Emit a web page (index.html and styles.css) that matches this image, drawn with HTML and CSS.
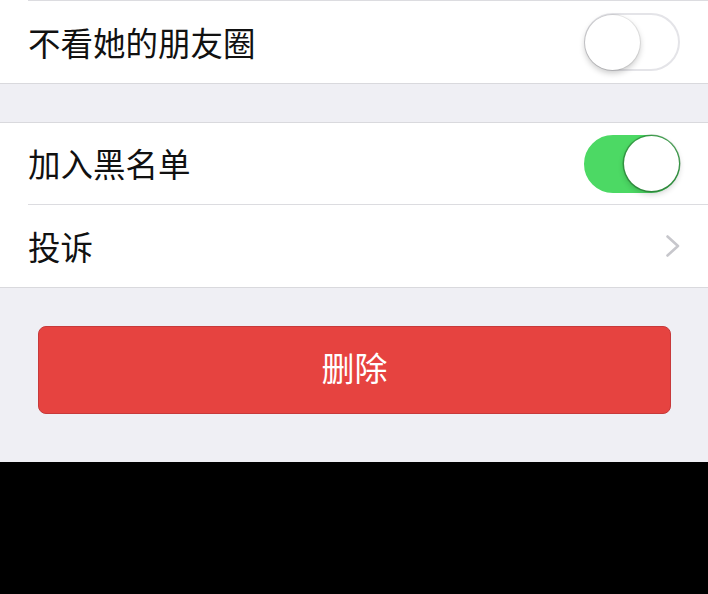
FILE: index.html
```html
<!DOCTYPE html>
<html lang="zh-CN">
<head>
<meta charset="utf-8">
<link rel="stylesheet" href="styles.css">
</head>
<body>
<div class="page">
  <div class="group group-first">
    <div class="sep"></div>
    <div class="row row-a">
      <span class="label">不看她的朋友圈</span>
      <span class="switch"><span class="knob"></span></span>
    </div>
  </div>
  <div class="gap"></div>
  <div class="group">
    <div class="row row-b">
      <span class="label">加入黑名单</span>
      <span class="switch on"><span class="knob"></span></span>
    </div>
    <div class="sep"></div>
    <div class="row row-c">
      <span class="label">投诉</span>
      <svg class="chev" width="16" height="24" viewBox="0 0 16 24"><path d="M2.5 2.5 L13 12 L2.5 21.5" fill="none" stroke="#c7c7cc" stroke-width="2.6" stroke-linecap="round" stroke-linejoin="round"/></svg>
    </div>
  </div>
  <div class="actions">
    <div class="btn-delete">删除</div>
  </div>
</div>
</body>
</html>
```
FILE: styles.css
```css
html, body {
  margin: 0;
  padding: 0;
  background: #000;
}
.page {
  width: 708px;
  height: 462px;
  background: #efeff4;
  font-family: "Noto Sans CJK SC", "Noto Sans", sans-serif;
  overflow: hidden;
}
.group {
  background: #fff;
  border-top: 1px solid #d9d9dd;
  border-bottom: 1px solid #d9d9dd;
}
.group-first {
  border-top: none;
}
.sep {
  height: 1px;
  margin-left: 28px;
  background: #dcdce0;
}
.row {
  display: flex;
  align-items: center;
  justify-content: space-between;
  padding: 0 28px 0 28px;
}
.row-a { height: 82px; }
.row-b { height: 81px; }
.row-c { height: 82px; }
.label {
  font-size: 32.5px;
  color: #111;
  line-height: 1;
}
.gap {
  height: 38px;
}
.switch {
  box-sizing: border-box;
  width: 96px;
  height: 58px;
  border-radius: 29px;
  border: 2px solid #e4e4e8;
  background: #fff;
  display: flex;
  align-items: center;
  justify-content: flex-start;
  padding: 0;
}
.switch .knob {
  width: 55px;
  height: 55px;
  border-radius: 50%;
  background: #fff;
  box-shadow: 0 3px 6px rgba(0,0,0,0.22), 0 0 0 1px rgba(0,0,0,0.08);
  margin-left: -1px;
}
.switch.on {
  background: #4cd964;
  border-color: #4cd964;
  justify-content: flex-end;
}
.switch.on .knob {
  margin-left: 0;
  margin-right: -1px;
  box-shadow: 0 3px 6px rgba(0,0,0,0.2), 0 0 0 1.5px rgba(40,120,50,0.6);
}
.chev {
  display: block;
  margin-right: -1px;
}
.actions {
  padding: 38px 37px 0 38px;
}
.btn-delete {
  box-sizing: border-box;
  height: 88px;
  padding-bottom: 5px;
  border: 1px solid #c7393a;
  border-radius: 8px;
  background: #e64340;
  color: #fff;
  font-size: 33px;
  display: flex;
  align-items: center;
  justify-content: center;
  line-height: 1;
}
```
